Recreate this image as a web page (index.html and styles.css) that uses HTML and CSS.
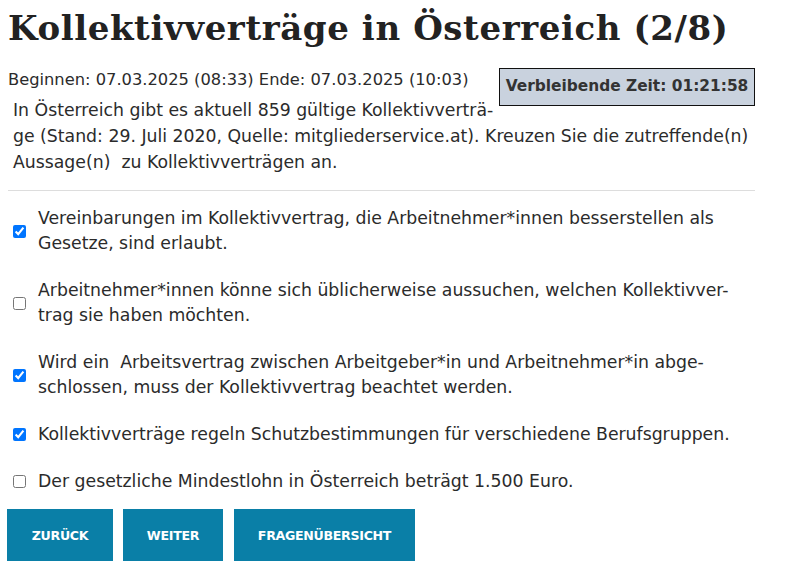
FILE: index.html
```html
<!DOCTYPE html>
<html lang="de">
<head>
<meta charset="utf-8">
<title>Kollektivverträge in Österreich</title>
<link rel="stylesheet" href="styles.css">
</head>
<body>
<div class="page">
  <h1 class="title">Kollektivverträge in Österreich (2/8)</h1>
  <div class="meta">
    <div class="timer">Verbleibende Zeit: 01:21:58</div>
    <div class="dates">Beginnen: 07.03.2025 (08:33) Ende: 07.03.2025 (10:03)</div>
    <p class="question">In Österreich gibt es aktuell 859 gültige Kollektivverträ-<br>ge (Stand: 29. Juli 2020, Quelle: mitgliederservice.at). Kreuzen Sie die zutreffende(n)<br>Aussage(n)&nbsp; zu Kollektivverträgen an.</p>
  </div>
  <hr class="divider">
  <ul class="answers">
    <li class="answer"><input type="checkbox" checked><span class="label">Vereinbarungen im Kollektivvertrag, die Arbeitnehmer*innen besserstellen als<br>Gesetze, sind erlaubt.</span></li>
    <li class="answer"><input type="checkbox"><span class="label">Arbeitnehmer*innen könne sich üblicherweise aussuchen, welchen Kollektivver-<br>trag sie haben möchten.</span></li>
    <li class="answer"><input type="checkbox" checked><span class="label">Wird ein&nbsp; Arbeitsvertrag zwischen Arbeitgeber*in und Arbeitnehmer*in abge-<br>schlossen, muss der Kollektivvertrag beachtet werden.</span></li>
    <li class="answer"><input type="checkbox" checked><span class="label">Kollektivverträge regeln Schutzbestimmungen für verschiedene Berufsgruppen.</span></li>
    <li class="answer"><input type="checkbox"><span class="label">Der gesetzliche Mindestlohn in Österreich beträgt 1.500 Euro.</span></li>
  </ul>
  <div class="buttons">
    <button class="btn btn-back">Zurück</button>
    <button class="btn btn-next">Weiter</button>
    <button class="btn btn-overview">Fragenübersicht</button>
  </div>
</div>
</body>
</html>
```
FILE: styles.css
```css
html, body {
  margin: 0;
  padding: 0;
  background: #fff;
}
body {
  font-family: "DejaVu Sans", "Open Sans", sans-serif;
  color: #2b2b2b;
}
.page {
  width: 747px;
  padding: 0 8px;
}
.title {
  font-family: "DejaVu Serif", serif;
  font-weight: bold;
  font-size: 34px;
  letter-spacing: 0.6px;
  color: #222;
  margin: 0;
  padding-top: 8px;
  line-height: 40px;
  white-space: nowrap;
}
.meta {
  margin-top: 22px;
}
.timer {
  float: right;
  box-sizing: border-box;
  width: 256px;
  height: 38px;
  margin-right: 0;
  margin-top: -2px;
  background: #c9d2de;
  border: 1.5px solid #111;
  text-align: center;
  line-height: 35px;
  font-weight: bold;
  font-size: 15.4px;
  color: #333;
}
.dates {
  font-size: 16.3px;
  line-height: 20px;
}
.question {
  margin: 7px 0 0;
  padding-left: 5px;
  font-size: 17.3px;
  line-height: 26px;
  white-space: nowrap;
}
.divider {
  clear: both;
  border: 0;
  border-top: 1px solid #ddd;
  margin: 15px 0 0;
}
.answers {
  list-style: none;
  margin: 0;
  padding: 0;
}
.answer {
  display: flex;
  align-items: center;
  margin-top: 15px;
  line-height: 25px;
  font-size: 17.3px;
  white-space: nowrap;
}
.answer + .answer {
  margin-top: 22px;
}
.answer input {
  margin: 0 12px 0 5px;
  width: 13px;
  height: 13px;
  flex: none;
}
.buttons {
  display: flex;
  margin-top: 15px;
}
.btn {
  background: #0a7fa7;
  color: #fff;
  border: 0;
  height: 52px;
  padding: 0;
  font-family: "DejaVu Sans", sans-serif;
  font-weight: bold;
  font-size: 12.6px;
  text-transform: uppercase;
  letter-spacing: -0.3px;
  text-align: center;
}
.btn-back { margin-left: -1px; width: 106px; }
.btn-next { margin-left: 10px; width: 100px; }
.btn-overview { margin-left: 11px; width: 181px; }
```
